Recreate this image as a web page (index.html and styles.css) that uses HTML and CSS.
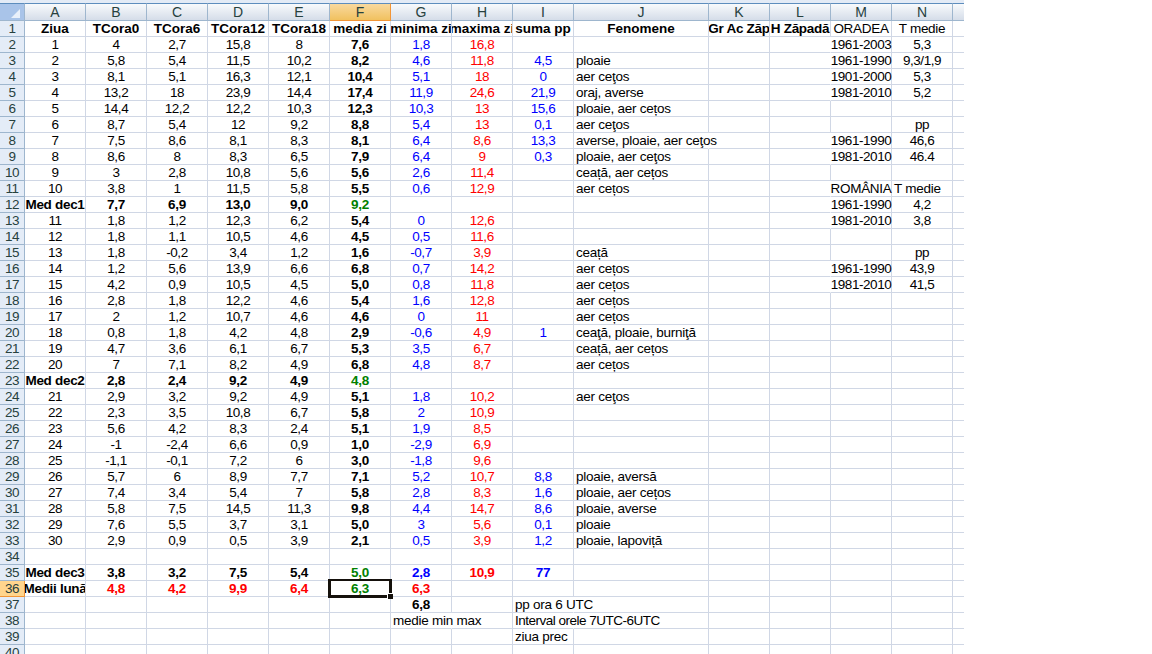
FILE: index.html
```html
<!DOCTYPE html>
<html>
<head>
	<meta charset="utf-8">
	<title>Date meteo</title>
	<link rel="stylesheet" href="styles.css">
</head>
<body>
	<div id="sheet">
		<table>
			<colgroup id="cols"></colgroup>
			<thead><tr id="letters"></tr></thead>
			<tbody id="rows"></tbody>
		</table>
	</div>
	<script src="sheet.js"></script>
</body>
</html>
```
FILE: styles.css
```css
*, *::before, *::after{
	margin: 0;
	padding: 0;
	box-sizing: border-box;
}
body{
	background: #fff;
	overflow: hidden;
	font-family: "Liberation Sans", Arial, sans-serif;
	font-size: 13.5px;
	color: #000;
}
#sheet{
	width: 964px;
	height: 654px;
	overflow: hidden;
	border-top: 3px solid #e3ebf6;
}
table{
	width: 964px;
	table-layout: fixed;
	border-collapse: separate;
	border-spacing: 0;
}
th{
	font-weight: normal;
	color: #27413e;
}
thead th{
	height: 18px;
	line-height: 16px;
	font-size: 14px;
	border-top: 1px solid #5d8dbd;
	border-right: 1px solid #9eb6ce;
	border-bottom: 1px solid #9eb6ce;
	background: linear-gradient(#f8fafc, #d5dde9);
}
thead th.corner{
	background: #a9c4e9;
}
.corner svg{
	display: block;
	margin: 3px 0 0 11px;
}
thead th.active{
	background: linear-gradient(#f9d99f, #f1c15f);
	border-right-color: #f29536;
	border-bottom-color: #f29536;
}
thead th:last-child, td:last-child{
	border-right: 0;
}
tbody th{
	height: 16px;
	line-height: 15px;
	letter-spacing: -0.4px;
	background: #e4ecf7;
	border-right: 1px solid #9eb6ce;
	border-bottom: 1px solid #9eb6ce;
}
tbody th.active{
	background: #ffd58d;
	border-color: #f29536;
}
td{
	height: 16px;
	line-height: 15px;
	letter-spacing: -0.45px;
	border-right: 1px solid #d0d7e5;
	border-bottom: 1px solid #d0d7e5;
	white-space: nowrap;
}
td div{
	display: flex;
	justify-content: center;
	height: 15px;
	overflow: hidden;
}
td.left div{
	justify-content: flex-start;
	padding-left: 2px;
}
td.left{
	letter-spacing: -0.25px;
}
td.label{
	letter-spacing: -0.3px;
}
td.note{
	letter-spacing: -0.5px;
}
td.spill div{
	overflow: visible;
}
td.open{
	border-right-color: transparent;
}
.bold{
	font-weight: bold;
	letter-spacing: -0.3px;
}
.bold.title{
	letter-spacing: 0;
}
.bold.tight{
	letter-spacing: -0.3px;
}
.blue{
	color: #00f;
}
.red{
	color: #f00;
}
.green{
	color: #008000;
}
.selected{
	position: relative;
}
.selected::before{
	content: "";
	position: absolute;
	top: -2px;
	left: -2px;
	width: 64px;
	height: 19px;
	border: 3px solid #15110c;
	border-top-width: 2px;
}
.selected::after{
	content: "";
	position: absolute;
	right: -3px;
	bottom: -3px;
	width: 6px;
	height: 6px;
	background: #15110c;
	border: solid #fff;
	border-width: 1px 0 0 1px;
}
```
FILE: sheet.js
```js
var widths = [25, 61, 61, 61, 61, 61, 61, 61, 61, 61, 135, 61, 61, 61, 61, 12];
var letters = "ABCDEFGHIJKLMN";

// one line per row, cells A to N
var data = [
	"Ziua|TCora0|TCora6|TCora12|TCora18|media zi|minima zi|maxima zi|suma pp|Fenomene|Gr Ac Zăp|H Zăpadă|ORADEA|T medie",
	"1|4|2,7|15,8|8|7,6|1,8|16,8|||||1961-2003|5,3",
	"2|5,8|5,4|11,5|10,2|8,2|4,6|11,8|4,5|ploaie|||1961-1990|9,3/1,9",
	"3|8,1|5,1|16,3|12,1|10,4|5,1|18|0|aer ceţos|||1901-2000|5,3",
	"4|13,2|18|23,9|14,4|17,4|11,9|24,6|21,9|oraj, averse|||1981-2010|5,2",
	"5|14,4|12,2|12,2|10,3|12,3|10,3|13|15,6|ploaie, aer cețos",
	"6|8,7|5,4|12|9,2|8,8|5,4|13|0,1|aer ceţos||||pp",
	"7|7,5|8,6|8,1|8,3|8,1|6,4|8,6|13,3|averse, ploaie, aer ceţos|||1961-1990|46,6",
	"8|8,6|8|8,3|6,5|7,9|6,4|9|0,3|ploaie, aer ceţos|||1981-2010|46.4",
	"9|3|2,8|10,8|5,6|5,6|2,6|11,4||ceață, aer cețos",
	"10|3,8|1|11,5|5,8|5,5|0,6|12,9||aer cețos|||ROMÂNIA|T medie",
	"Med dec1|7,7|6,9|13,0|9,0|9,2|||||||1961-1990|4,2",
	"11|1,8|1,2|12,3|6,2|5,4|0|12,6|||||1981-2010|3,8",
	"12|1,8|1,1|10,5|4,6|4,5|0,5|11,6",
	"13|1,8|-0,2|3,4|1,2|1,6|-0,7|3,9||ceață||||pp",
	"14|1,2|5,6|13,9|6,6|6,8|0,7|14,2||aer cețos|||1961-1990|43,9",
	"15|4,2|0,9|10,5|4,5|5,0|0,8|11,8||aer cețos|||1981-2010|41,5",
	"16|2,8|1,8|12,2|4,6|5,4|1,6|12,8||aer cețos",
	"17|2|1,2|10,7|4,6|4,6|0|11||aer cețos",
	"18|0,8|1,8|4,2|4,8|2,9|-0,6|4,9|1|ceaţă, ploaie, burniţă",
	"19|4,7|3,6|6,1|6,7|5,3|3,5|6,7||ceață, aer cețos",
	"20|7|7,1|8,2|4,9|6,8|4,8|8,7||aer cețos",
	"Med dec2|2,8|2,4|9,2|4,9|4,8",
	"21|2,9|3,2|9,2|4,9|5,1|1,8|10,2||aer ceţos",
	"22|2,3|3,5|10,8|6,7|5,8|2|10,9",
	"23|5,6|4,2|8,3|2,4|5,1|1,9|8,5",
	"24|-1|-2,4|6,6|0,9|1,0|-2,9|6,9",
	"25|-1,1|-0,1|7,2|6|3,0|-1,8|9,6",
	"26|5,7|6|8,9|7,7|7,1|5,2|10,7|8,8|ploaie, aversă",
	"27|7,4|3,4|5,4|7|5,8|2,8|8,3|1,6|ploaie, aer cețos",
	"28|5,8|7,5|14,5|11,3|9,8|4,4|14,7|8,6|ploaie, averse",
	"29|7,6|5,5|3,7|3,1|5,0|3|5,6|0,1|ploaie",
	"30|2,9|0,9|0,5|3,9|2,1|0,5|3,9|1,2|ploaie, lapoviță",
	"",
	"Med dec3|3,8|3,2|7,5|5,4|5,0|2,8|10,9|77",
	"Medii lună|4,8|4,2|9,9|6,4|6,3|6,3",
	"||||||6,8||pp ora 6 UTC",
	"||||||medie min max||Interval orele 7UTC-6UTC",
	"||||||||ziua prec",
	""
];

// cells whose text runs over the gridline on their right
var open = ["J8", "G38", "I37", "I38", "L2", "L3", "L4", "L5", "L8", "L9", "L11", "L12", "L13", "L16", "L17"];
var means = [12, 23, 35, 36];

function cellClass(c, r) {
	var letter = letters.charAt(c);
	var mean = means.indexOf(r) >= 0;
	var cls = [];
	if (mean && c < 9 || r == 37 && c == 6 || r == 1 && c < 12 || c == 5) cls.push("bold");
	if (r == 1 && c < 12) cls.push(c > 9 ? "tight" : "title");
	if (r == 36 && c > 0 && c != 5) cls.push("red");
	else if (c == 5 && mean) cls.push("green");
	else if (r > 1 && r < 36 && (c == 6 || c == 8)) cls.push("blue");
	else if (r > 1 && r < 36 && c == 7) cls.push("red");
	if (c == 9 && r > 1 || r > 36 && c == 8 || r == 38 && c == 6 || r == 11 && c == 13) cls.push("left");
	if (r == 1 && c > 11 || r == 11 && c == 12) cls.push("label");
	if (r == 38 && c == 8) cls.push("note");
	if (r > 36 || c == 9 || c == 12) cls.push("spill");
	if (open.indexOf(letter + r) >= 0) cls.push("open");
	if (letter + r == "F36") cls.push("selected");
	return cls.join(" ");
}

var cols = "", head = "", body = "";
widths.forEach(function(w) {
	cols += '<col style="width:' + w + 'px">';
});

head = '<th class="corner"><svg width="10" height="10"><path d="M9 0V9H0Z" fill="#e9f0fa"/></svg></th>';
letters.split("").forEach(function(l) {
	head += '<th' + (l == "F" ? ' class="active"' : '') + '>' + l + '</th>';
});
head += "<th></th>";

data.forEach(function(line, i) {
	var r = i + 1, cells = line.split("|");
	body += '<tr><th' + (r == 36 ? ' class="active"' : '') + '>' + r + '</th>';
	for (var c = 0; c < 15; c++) {
		body += '<td class="' + cellClass(c, r) + '"><div>' + (cells[c] ? '<span>' + cells[c] + '</span>' : '') + '</div></td>';
	}
	body += "</tr>";
});

document.getElementById("cols").innerHTML = cols;
document.getElementById("letters").innerHTML = head;
document.getElementById("rows").innerHTML = body;
```
